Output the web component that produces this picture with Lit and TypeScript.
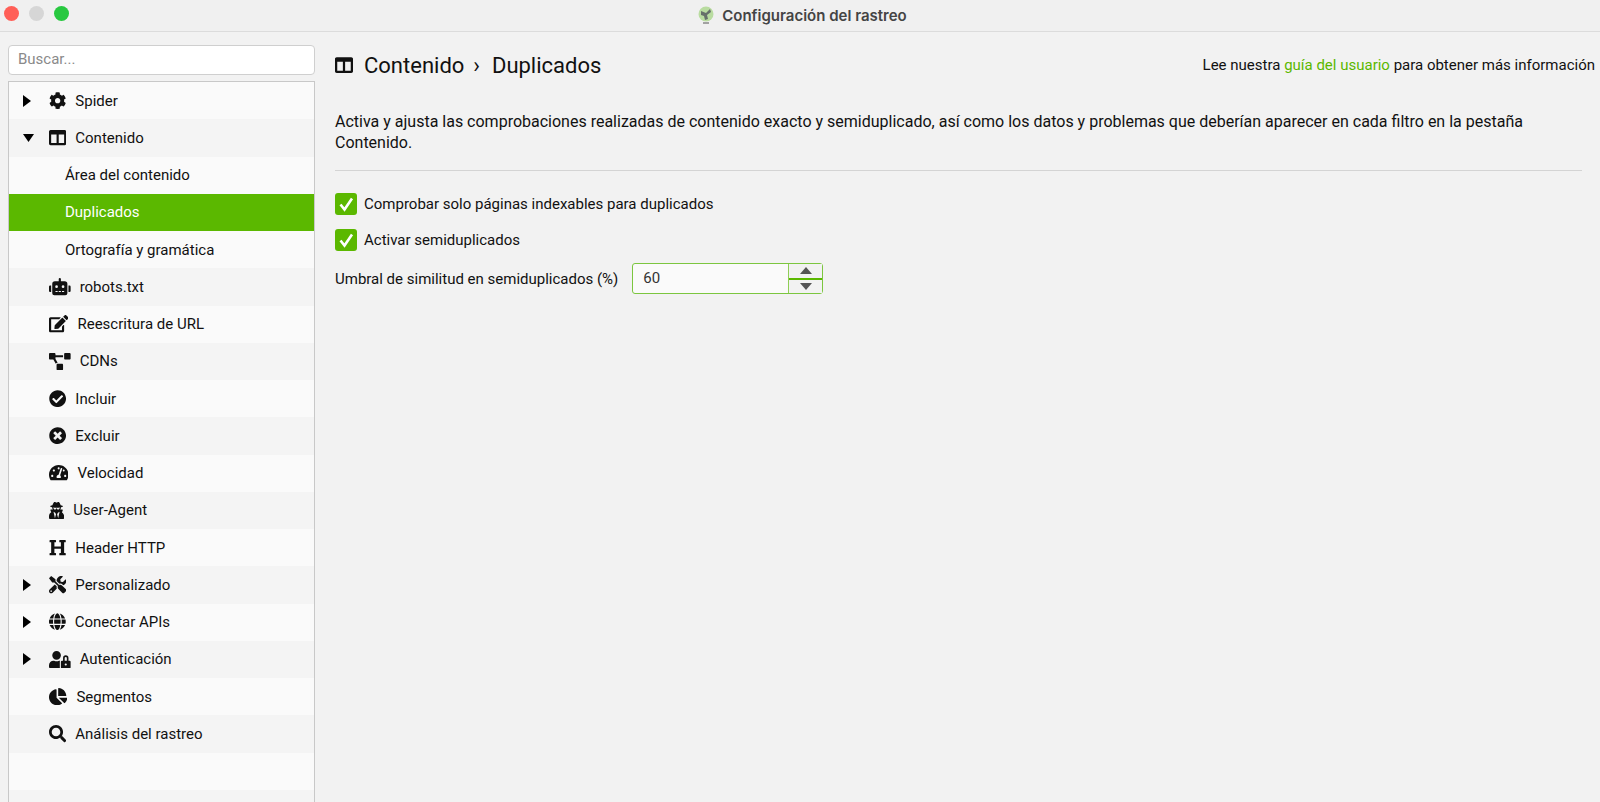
import { LitElement, html, css, svg } from "lit";
import { customElement } from "lit/decorators.js";

// font awesome 5 solid shapes: [viewBox width, path]
const icons: Record<string, [number, string]> = {
  cog: [512, "M487.4 315.7l-42.6-24.6c4.3-23.2 4.3-47 0-70.2l42.6-24.6c4.9-2.8 7.1-8.6 5.5-14-11.1-35.6-30-67.8-54.7-94.6-3.8-4.1-10-5.1-14.8-2.3L380.8 110c-17.9-15.4-38.5-27.3-60.8-35.1V25.8c0-5.6-3.9-10.5-9.4-11.7-36.7-8.2-74.3-7.8-109.2 0-5.5 1.2-9.4 6.1-9.4 11.7V75c-22.2 7.9-42.8 19.8-60.8 35.1L88.7 85.5c-4.9-2.8-11-1.9-14.8 2.3-24.7 26.7-43.6 58.9-54.7 94.6-1.7 5.4.6 11.2 5.5 14L67.3 221c-4.3 23.2-4.3 47 0 70.2l-42.6 24.6c-4.9 2.8-7.1 8.6-5.5 14 11.1 35.6 30 67.8 54.7 94.6 3.8 4.1 10 5.1 14.8 2.3l42.6-24.6c17.9 15.4 38.5 27.3 60.8 35.1v49.2c0 5.6 3.9 10.5 9.4 11.7 36.7 8.2 74.3 7.8 109.2 0 5.5-1.2 9.4-6.1 9.4-11.7v-49.2c22.2-7.9 42.8-19.8 60.8-35.1l42.6 24.6c4.9 2.8 11 1.9 14.8-2.3 24.7-26.7 43.6-58.9 54.7-94.6 1.5-5.5-.7-11.3-5.6-14.1zM256 336c-44.1 0-80-35.9-80-80s35.9-80 80-80 80 35.9 80 80-35.9 80-80 80z"],
  columns: [512, "M464 32H48C21.49 32 0 53.49 0 80v352c0 26.51 21.49 48 48 48h416c26.51 0 48-21.49 48-48V80c0-26.51-21.49-48-48-48zM224 416H64V160h160v256zm224 0H288V160h160v256z"],
  robot: [640, "M32,224H64V416H32A31.96166,31.96166,0,0,1,0,384V256A31.96166,31.96166,0,0,1,32,224Zm512-48V448a64.06328,64.06328,0,0,1-64,64H160a64.06328,64.06328,0,0,1-64-64V176a79.974,79.974,0,0,1,80-80H288V32a32,32,0,0,1,64,0V96H464A79.974,79.974,0,0,1,544,176ZM264,256a40,40,0,1,0-40,40A39.997,39.997,0,0,0,264,256Zm-8,128H192v32h64Zm96,0H288v32h64ZM456,256a40,40,0,1,0-40,40A39.997,39.997,0,0,0,456,256Zm-8,128H384v32h64ZM640,256V384a31.96166,31.96166,0,0,1-32,32H576V224h32A31.96166,31.96166,0,0,1,640,256Z"],
  edit: [576, "M402.6 83.2l90.2 90.2c3.8 3.8 3.8 10 0 13.8L274.4 405.6l-92.8 10.3c-12.4 1.4-22.9-9.1-21.5-21.5l10.3-92.8L388.8 83.2c3.8-3.8 10-3.8 13.8 0zm162-22.9l-48.8-48.8c-15.2-15.2-39.9-15.2-55.2 0l-35.4 35.4c-3.8 3.8-3.8 10 0 13.8l90.2 90.2c3.8 3.8 10 3.8 13.8 0l35.4-35.4c15.2-15.3 15.2-40 0-55.2zM384 346.2V448H64V128h229.8c3.2 0 6.2-1.3 8.5-3.5l40-40c7.6-7.6 2.2-20.5-8.5-20.5H48C21.5 64 0 85.5 0 112v352c0 26.5 21.5 48 48 48h352c26.5 0 48-21.5 48-48V306.2c0-10.7-12.9-16-20.5-8.5l-40 40c-2.2 2.3-3.5 5.3-3.5 8.5z"],
  diagram: [640, "M384 320H256c-17.67 0-32 14.33-32 32v128c0 17.67 14.33 32 32 32h128c17.67 0 32-14.33 32-32V352c0-17.67-14.33-32-32-32zM192 32c0-17.67-14.33-32-32-32H32C14.33 0 0 14.33 0 32v128c0 17.67 14.33 32 32 32h95.72l73.16 128.04C211.98 300.98 232.4 288 256 288h.28L192 175.51V128h224V64H192V32zM608 0H480c-17.67 0-32 14.33-32 32v128c0 17.67 14.33 32 32 32h128c17.67 0 32-14.33 32-32V32c0-17.67-14.33-32-32-32z"],
  check: [512, "M504 256c0 136.967-111.033 248-248 248S8 392.967 8 256 119.033 8 256 8s248 111.033 248 248zM227.314 387.314l184-184c6.248-6.248 6.248-16.379 0-22.627l-22.627-22.627c-6.248-6.249-16.379-6.249-22.628 0L216 308.118l-70.059-70.059c-6.248-6.248-16.379-6.248-22.628 0l-22.627 22.627c-6.248 6.248-6.248 16.379 0 22.627l104 104c6.249 6.249 16.379 6.249 22.628.001z"],
  times: [512, "M256 8C119 8 8 119 8 256s111 248 248 248 248-111 248-248S393 8 256 8zm121.6 313.1c4.7 4.7 4.7 12.3 0 17L338 377.6c-4.7 4.7-12.3 4.7-17 0L256 312l-65.1 65.6c-4.7 4.7-12.3 4.7-17 0L134.4 338c-4.7-4.7-4.7-12.3 0-17l65.6-65-65.6-65.1c-4.7-4.7-4.7-12.3 0-17l39.6-39.6c4.7-4.7 12.3-4.7 17 0l65 65.7 65.1-65.6c4.7-4.7 12.3-4.7 17 0l39.6 39.6c4.7 4.7 4.7 12.3 0 17L312 256l65.6 65.1z"],
  gauge: [576, "M288 32C128.94 32 0 160.94 0 320c0 52.8 14.25 102.26 39.06 144.8 5.61 9.62 16.3 15.2 27.44 15.2h443c11.14 0 21.83-5.58 27.44-15.2C561.75 422.26 576 372.8 576 320c0-159.06-128.94-288-288-288zm0 64c14.71 0 26.58 10.13 30.32 23.65-1.11 2.26-2.64 4.23-3.45 6.67l-9.22 27.67c-5.13 3.49-10.97 6.01-17.64 6.01-17.67 0-32-14.33-32-32S270.33 96 288 96zM96 384c-17.67 0-32-14.33-32-32s14.33-32 32-32 32 14.33 32 32-14.33 32-32 32zm48-160c-17.67 0-32-14.33-32-32s14.33-32 32-32 32 14.33 32 32-14.33 32-32 32zm246.77-72.41l-61.33 184C343.13 347.33 352 364.54 352 384c0 11.72-3.38 22.55-8.88 32H232.88c-5.5-9.45-8.88-20.28-8.88-32 0-33.94 26.5-61.43 59.9-63.59l61.34-184.01c4.17-12.56 17.73-19.45 30.36-15.17 12.57 4.19 19.35 17.79 15.17 30.36zm14.66 57.2l15.52-46.55c3.47-1.29 7.13-2.23 11.05-2.23 17.67 0 32 14.33 32 32s-14.33 32-32 32c-11.38-.01-20.89-6.28-26.57-15.22zM480 384c-17.67 0-32-14.33-32-32s14.33-32 32-32 32 14.33 32 32-14.33 32-32 32z"],
  secret: [448, "M383.9 308.3l23.9-62.6c4-10.5-3.7-21.7-15-21.7h-58.5c11-18.9 17.8-40.6 17.8-64v-.3c39.2-7.8 64-19.1 64-31.7 0-13.3-27.3-25.1-70.1-33-9.2-32.8-27-65.8-40.6-82.8-9.5-11.9-25.9-15.6-39.5-8.8l-27.6 13.8c-9 4.5-19.6 4.5-28.6 0L182.1 3.4c-13.6-6.8-30-3.1-39.5 8.8-13.5 17-31.4 50-40.6 82.8-42.7 7.9-70 19.7-70 33 0 12.6 24.8 23.9 64 31.7v.3c0 23.4 6.8 45.1 17.8 64H56.3c-11.5 0-19.2 11.7-14.7 22.3l25.8 60.2C27.3 329.8 0 372.7 0 422.4v44.8C0 491.9 20.1 512 44.8 512h358.4c24.7 0 44.8-20.1 44.8-44.8v-44.8c0-48.4-25.8-90.4-64.1-114.1zM176 480l-41.6-192 49.6 32 24 40-32 120zm96 0l-32-120 24-40 49.6-32L272 480zm41.7-298.5c-3.9 11.9-7 24.6-16.5 33.4-10.1 9.3-48 22.4-64-25-2.8-8.4-15.4-8.4-18.3 0-17 50.2-56 32.4-64 25-9.5-8.8-12.7-21.5-16.5-33.4-.8-2.5-6.3-5.7-6.3-5.8v-10.8c28.3 3.6 61 5.8 96 5.8s67.7-2.1 96-5.8v10.8c-.1.1-5.6 3.2-6.4 5.8z"],
  heading: [512, "M448 96v320h32a16 16 0 0 1 16 16v32a16 16 0 0 1-16 16H320a16 16 0 0 1-16-16v-32a16 16 0 0 1 16-16h32V288H160v128h32a16 16 0 0 1 16 16v32a16 16 0 0 1-16 16H32a16 16 0 0 1-16-16v-32a16 16 0 0 1 16-16h32V96H32a16 16 0 0 1-16-16V48a16 16 0 0 1 16-16h160a16 16 0 0 1 16 16v32a16 16 0 0 1-16 16h-32v128h192V96h-32a16 16 0 0 1-16-16V48a16 16 0 0 1 16-16h160a16 16 0 0 1 16 16v32a16 16 0 0 1-16 16z"],
  tools: [512, "M501.1 395.7L384 278.6c-23.1-23.1-57.6-27.6-85.4-13.9L192 158.1V96L64 0 0 64l96 128h62.1l106.6 106.6c-13.6 27.8-9.2 62.3 13.9 85.4l117.1 117.1c14.6 14.6 38.2 14.6 52.7 0l52.7-52.7c14.5-14.6 14.5-38.2 0-52.7zM331.7 225c28.3 0 54.9 11 74.9 31l19.4 19.4c15.8-6.9 30.8-16.5 43.8-29.5 37.1-37.1 49.7-89.3 37.9-136.7-2.2-9-13.5-12.1-20.1-5.5l-74.4 74.4-67.9-11.3L334 98.9l74.4-74.4c6.6-6.6 3.4-17.9-5.7-20.2-47.4-11.7-99.6.9-136.6 37.9-28.5 28.5-41.9 66.1-41.2 103.6l82.1 82.1c8.1-1.9 16.5-2.9 24.7-2.9zm-103.9 82l-56.7-56.7L18.7 402.8c-25 25-25 65.5 0 90.5s65.5 25 90.5 0l123.6-123.6c-7.6-19.9-9.9-41.6-5-62.7zM64 472c-13.2 0-24-10.8-24-24 0-13.3 10.7-24 24-24s24 10.7 24 24c0 13.2-10.7 24-24 24z"],
  globe: [496, "M336.5 160C322 70.7 287.8 8 248 8s-74 62.7-88.5 152h177zM152 256c0 22.2 1.2 43.5 3.3 64h185.3c2.1-20.5 3.3-41.8 3.3-64s-1.2-43.5-3.3-64H155.3c-2.1 20.5-3.3 41.8-3.3 64zm324.7-96c-28.6-67.9-86.5-120.4-158-141.6 24.4 33.8 41.2 84.7 50 141.6h108zM177.2 18.4C105.8 39.6 47.8 92.1 19.3 160h108c8.7-56.9 25.5-107.8 49.9-141.6zM487.4 192H372.7c2.1 21 3.3 42.5 3.3 64s-1.2 43-3.3 64h114.6c5.5-20.5 8.6-41.8 8.6-64s-3.1-43.5-8.5-64zM120 256c0-21.5 1.2-43 3.3-64H8.6C3.2 212.5 0 233.8 0 256s3.2 43.5 8.6 64h114.6c-2-21-3.2-42.5-3.2-64zm39.5 96c14.5 89.3 48.7 152 88.5 152s74-62.7 88.5-152h-177zm159.3 141.6c71.4-21.2 129.4-73.7 158-141.6h-108c-8.8 56.9-25.6 107.8-50 141.6zM19.3 352c28.6 67.9 86.5 120.4 158 141.6-24.4-33.8-41.2-84.7-50-141.6h-108z"],
  userlock: [640, "M224 256A128 128 0 1 0 96 128a128 128 0 0 0 128 128zm96 64a63.08 63.08 0 0 1 8.1-30.5c-4.8-.5-9.5-1.5-14.5-1.5h-16.7a174.08 174.08 0 0 1-145.8 0h-16.7A134.43 134.43 0 0 0 0 422.4V464a48 48 0 0 0 48 48h280.9a63.54 63.54 0 0 1-8.9-32zm288-32h-32v-80a80 80 0 0 0-160 0v80h-32a32 32 0 0 0-32 32v160a32 32 0 0 0 32 32h224a32 32 0 0 0 32-32V320a32 32 0 0 0-32-32zM496 432a32 32 0 1 1 32-32 32 32 0 0 1-32 32zm32-144h-64v-80a32 32 0 0 1 64 0z"],
  pie: [544, "M527.79 288H290.5l158.03 158.03c6.04 6.04 15.98 6.53 22.19.68 38.7-36.46 65.32-85.61 73.13-140.86 1.34-9.46-6.51-17.85-16.06-17.85zm-15.83-64.8C503.72 103.74 408.26 8.28 288.8.04 279.68-.59 272 7.1 272 16.24V240h223.77c9.14 0 16.82-7.68 16.19-16.8zM224 288V50.71c0-9.55-8.39-17.4-17.84-16.06C86.99 51.49-4.1 155.6.14 280.37 4.5 408.51 114.83 513.59 243.03 511.98c50.4-.63 96.97-16.87 135.26-44.03 7.9-5.6 8.42-17.23 1.57-24.08L224 288z"],
  search: [512, "M505 442.7L405.3 343c-4.5-4.5-10.6-7-17-7H372c27.6-35.3 44-79.7 44-128C416 93.1 322.9 0 208 0S0 93.1 0 208s93.1 208 208 208c48.3 0 92.7-16.4 128-44v16.3c0 6.4 2.5 12.5 7 17l99.7 99.7c9.4 9.4 24.6 9.4 33.9 0l28.3-28.3c9.4-9.4 9.4-24.6.1-34zM208 336c-70.7 0-128-57.2-128-128 0-70.7 57.2-128 128-128 70.7 0 128 57.2 128 128 0 70.7-57.2 128-128 128z"],
};

type Row = { label: string; icon?: string; arrow?: "right" | "down"; sub?: boolean; active?: boolean };

const rows: Row[] = [
  { label: "Spider", icon: "cog", arrow: "right" },
  { label: "Contenido", icon: "columns", arrow: "down" },
  { label: "Área del contenido", sub: true },
  { label: "Duplicados", sub: true, active: true },
  { label: "Ortografía y gramática", sub: true },
  { label: "robots.txt", icon: "robot" },
  { label: "Reescritura de URL", icon: "edit" },
  { label: "CDNs", icon: "diagram" },
  { label: "Incluir", icon: "check" },
  { label: "Excluir", icon: "times" },
  { label: "Velocidad", icon: "gauge" },
  { label: "User-Agent", icon: "secret" },
  { label: "Header HTTP", icon: "heading" },
  { label: "Personalizado", icon: "tools", arrow: "right" },
  { label: "Conectar APIs", icon: "globe", arrow: "right" },
  { label: "Autenticación", icon: "userlock", arrow: "right" },
  { label: "Segmentos", icon: "pie" },
  { label: "Análisis del rastreo", icon: "search" },
  { label: "" },
  { label: "" },
];

function icon(name: string, size = 17.3) {
  const [w, d] = icons[name];
  return html`<svg class="icon" width=${(w / 512) * size} height=${size} viewBox="0 0 ${w} 512">
    ${svg`<path d=${d}></path>`}
  </svg>`;
}

const tick = html`<svg class="tick" width="22" height="22" viewBox="0 0 22 22">
  <path d="M5.5 11.5l4 5 7.5-11" fill="none" stroke="#fff" stroke-width="2.6"></path>
</svg>`;

@customElement("app-root")
export class AppRoot extends LitElement {
  static styles = css`
    :host {
      display: block;
      height: 802px;
      overflow: hidden;
      background: #f2f2f2;
      color: #111;
      font-family: Roboto, "Liberation Sans", sans-serif;
      font-size: 15px;
    }

    .titlebar {
      position: relative;
      height: 31px;
      border-bottom: 1px solid #dcdcdc;
      background: #f0f0f0;
      display: flex;
      align-items: center;
      justify-content: center;
      gap: 7px;
      padding-left: 4px;
    }

    .lights {
      position: absolute;
      left: 4px;
      top: 6px;
      display: flex;
      gap: 10px;
    }

    .lights span {
      width: 15px;
      height: 15px;
      border-radius: 50%;
    }

    .title {
      font-family: Inter, sans-serif;
      font-weight: 600;
      font-size: 15px;
      color: #444;
    }

    .layout {
      display: grid;
      grid-template-columns: 307px 1fr;
      column-gap: 20px;
      padding-left: 8px;
    }

    .search {
      height: 30px;
      margin-top: 13px;
      box-sizing: border-box;
      border: 1.5px solid #cfcfcf;
      border-radius: 4px;
      background: #fff;
      color: #8a8a8a;
      padding-left: 9px;
      line-height: 27px;
    }

    .tree {
      margin-top: 6px;
      border: 1px solid #c8c8c8;
      border-bottom: 0;
    }

    .row {
      height: 37.25px;
      display: flex;
      align-items: center;
      background: #fafafa;
      padding-left: 14px;
    }

    .row:nth-child(even) {
      background: #f4f4f4;
    }

    .row.sub {
      padding-left: 56px;
    }

    .row.active {
      background: #5bb800;
      color: #fff;
    }

    .arrow {
      width: 26px;
      flex: none;
    }

    .arrow svg {
      display: block;
    }

    .icon {
      display: block;
      flex: none;
      margin-right: 9px;
      fill: #111;
    }

    .main {
      padding-right: 5px;
    }

    .head {
      height: 66px;
      display: flex;
      align-items: center;
      justify-content: space-between;
    }

    .crumb {
      display: flex;
      align-items: center;
      font-size: 22px;
    }

    .crumb .icon {
      margin-right: 11px;
    }

    .sep {
      margin: 0 12px 0 9px;
    }

    .help a {
      color: #5bb800;
      text-decoration: none;
    }

    .intro {
      margin: 13px 13px 0 0;
      font-size: 16px;
      line-height: 21px;
    }

    .rule {
      margin: 17px 13px 0 0;
      border-top: 1px solid #d4d4d4;
    }

    .options {
      margin-top: 22px;
      display: flex;
      flex-direction: column;
      gap: 13.5px;
    }

    .option {
      display: flex;
      align-items: center;
      gap: 7px;
      height: 22px;
    }

    .box {
      width: 22px;
      height: 22px;
      border-radius: 3px;
      background: #5bb800;
    }

    .tick {
      display: block;
    }

    .threshold {
      margin-top: -1px;
      display: flex;
      align-items: center;
      gap: 14px;
    }

    .spinner {
      width: 191px;
      height: 31px;
      box-sizing: border-box;
      border: 1px solid #7cc63f;
      border-radius: 3px;
      background: #fafafa;
      display: flex;
      color: #333;
    }

    .value {
      flex: 1;
      padding-left: 10px;
      line-height: 29px;
    }

    .steps {
      width: 33px;
      border-left: 1px solid #8fce55;
      display: grid;
      grid-template-rows: 1fr 2px 1fr;
      background: #f2f2f2;
    }

    .steps i {
      background: #5bb800;
    }

    .steps span {
      display: flex;
      align-items: center;
      justify-content: center;
    }
  `;

  render() {
    return html`
      <div class="titlebar">
        <div class="lights">
          <span style="background:#ff5f57"></span>
          <span style="background:#d6d6d6"></span>
          <span style="background:#28c840"></span>
        </div>
        <svg width="18" height="19" viewBox="0 0 18 19">
          <circle cx="9" cy="8" r="7.5" fill="#b9dca0"></circle>
          <path d="M4 5l5 2 4-4 1 3-4 3 1 4-3 1-1-4-3-1z" fill="#66706a"></path>
          <path d="M6 17h6" stroke="#888" stroke-width="1.5"></path>
        </svg>
        <span class="title">Configuración del rastreo</span>
      </div>
      <div class="layout">
        <div>
          <div class="search">Buscar...</div>
          <div class="tree">${rows.map((r) => this.renderRow(r))}</div>
        </div>
        <div class="main">
          <div class="head">
            <div class="crumb">
              ${icon("columns", 18)}<span>Contenido</span><span class="sep">›</span><span>Duplicados</span>
            </div>
            <div class="help">Lee nuestra <a>guía del usuario</a> para obtener más información</div>
          </div>
          <div class="intro">
            Activa y ajusta las comprobaciones realizadas de contenido exacto y semiduplicado, así como los datos y
            problemas que deberían aparecer en cada filtro en la pestaña Contenido.
          </div>
          <div class="rule"></div>
          <div class="options">
            <div class="option"><div class="box">${tick}</div>Comprobar solo páginas indexables para duplicados</div>
            <div class="option"><div class="box">${tick}</div>Activar semiduplicados</div>
            <div class="threshold">
              <span>Umbral de similitud en semiduplicados (%)</span>
              <div class="spinner">
                <div class="value">60</div>
                <div class="steps">
                  <span><svg width="12" height="7" viewBox="0 0 12 7"><path d="M6 0l6 7H0z" fill="#555"></path></svg></span>
                  <i></i>
                  <span><svg width="12" height="7" viewBox="0 0 12 7"><path d="M6 7L0 0h12z" fill="#555"></path></svg></span>
                </div>
              </div>
            </div>
          </div>
        </div>
      </div>
    `;
  }

  renderRow(r: Row) {
    const cls = `row${r.sub ? " sub" : ""}${r.active ? " active" : ""}`;
    if (r.sub) return html`<div class=${cls}>${r.label}</div>`;
    if (!r.label) return html`<div class=${cls}></div>`;
    return html`<div class=${cls}>
      <div class="arrow">
        ${r.arrow === "right"
          ? html`<svg width="8" height="12" viewBox="0 0 8 12"><path d="M0 0l8 6-8 6z"></path></svg>`
          : r.arrow === "down"
            ? html`<svg width="11" height="8" viewBox="0 0 11 8"><path d="M0 0h11L5.5 8z"></path></svg>`
            : ""}
      </div>
      ${icon(r.icon!)}<span>${r.label}</span>
    </div>`;
  }
}
